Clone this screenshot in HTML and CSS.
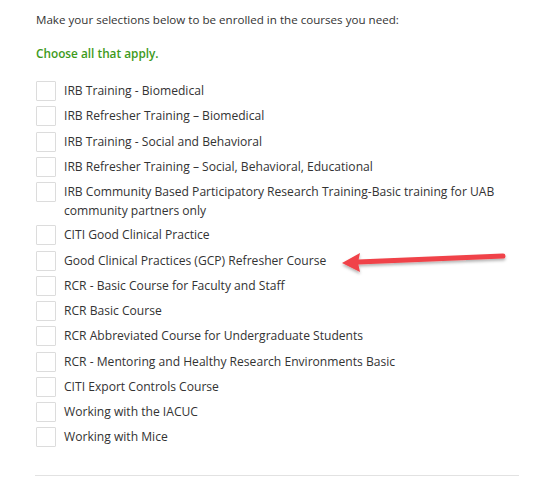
FILE: index.html
```html
<!DOCTYPE html>
<html>
<head>
<meta charset="utf-8">
<link rel="stylesheet" href="styles.css">
</head>
<body>
<div class="page">
  <p class="intro">Make your selections below to be enrolled in the courses you need:</p>
  <p class="hint">Choose all that apply.</p>
  <ul class="courses">
    <li class="course"><span class="box"></span><span class="label">IRB Training - Biomedical</span></li>
    <li class="course"><span class="box"></span><span class="label">IRB Refresher Training – Biomedical</span></li>
    <li class="course"><span class="box"></span><span class="label">IRB Training - Social and Behavioral</span></li>
    <li class="course"><span class="box"></span><span class="label">IRB Refresher Training – Social, Behavioral, Educational</span></li>
    <li class="course"><span class="box"></span><span class="label">IRB Community Based Participatory Research Training-Basic training for UAB community partners only</span></li>
    <li class="course"><span class="box"></span><span class="label">CITI Good Clinical Practice</span></li>
    <li class="course marked"><span class="box"></span><span class="label">Good Clinical Practices (GCP) Refresher Course</span>
      <svg class="arrow" width="180" height="34" viewBox="0 0 180 34">
        <defs>
          <filter id="sh" x="-10%" y="-50%" width="120%" height="200%">
            <feDropShadow dx="0" dy="2" stdDeviation="1.5" flood-color="#000" flood-opacity="0.3"/>
          </filter>
        </defs>
        <g filter="url(#sh)">
          <line x1="20" y1="20" x2="165" y2="14" stroke="#f04348" stroke-width="5" stroke-linecap="round"/>
          <polygon points="4,21 22,11 20,20.5 22,30" fill="#f04348"/>
        </g>
      </svg>
    </li>
    <li class="course"><span class="box"></span><span class="label">RCR - Basic Course for Faculty and Staff</span></li>
    <li class="course"><span class="box"></span><span class="label">RCR Basic Course</span></li>
    <li class="course"><span class="box"></span><span class="label">RCR Abbreviated Course for Undergraduate Students</span></li>
    <li class="course"><span class="box"></span><span class="label">RCR - Mentoring and Healthy Research Environments Basic</span></li>
    <li class="course"><span class="box"></span><span class="label">CITI Export Controls Course</span></li>
    <li class="course"><span class="box"></span><span class="label">Working with the IACUC</span></li>
    <li class="course"><span class="box"></span><span class="label">Working with Mice</span></li>
  </ul>
  <hr class="rule">
</div>
</body>
</html>
```
FILE: styles.css
```css
html, body {
  margin: 0;
  padding: 0;
  background: #fff;
}
body {
  font-family: "Open Sans", "Liberation Sans", sans-serif;
  color: #333;
  font-size: 12px;
}
.page {
  padding: 10px 23px 0 35px;
}
.intro {
  margin: 0 0 0 1px;
  line-height: 20px;
  font-size: 11.6px;
  color: #333;
}
.hint {
  margin: 13px 0 0 1px;
  line-height: 20px;
  font-size: 11.8px;
  font-weight: 600;
  color: #3d9a1b;
}
.courses {
  list-style: none;
  margin: 18px 0 0 1px;
  padding: 0;
  display: flex;
  flex-direction: column;
  gap: 5.25px;
}
.course {
  display: flex;
  align-items: flex-start;
  gap: 8px;
  line-height: 19px;
  font-size: 12.1px;
  position: relative;
}
.box {
  flex: none;
  width: 18px;
  height: 18px;
  border: 1px solid #dcdcdc;
  border-radius: 1px;
  background: #fff;
}
.label {
  color: #333;
  max-width: 445px;
}
.arrow {
  position: absolute;
  left: 302px;
  top: -9px;
}
.rule {
  margin: 28px 0 0 0;
  border: 0;
  border-top: 1px solid #e2e2e2;
  width: 484px;
}
```
